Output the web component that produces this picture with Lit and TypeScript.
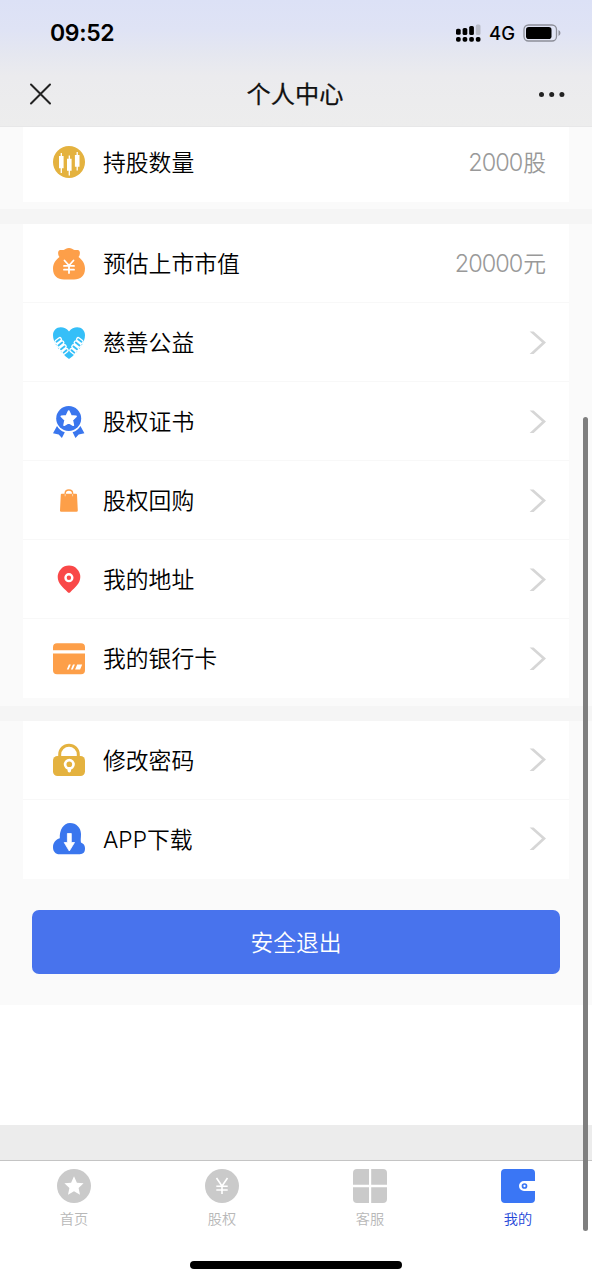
import { LitElement, html, css, svg, TemplateResult } from "lit";
import { customElement, property } from "lit/decorators.js";

const STAR = "M0 -10 L2.9 -3.6 L9.6 -3 L4.6 1.7 L6 8.4 L0 5 L-6 8.4 L-4.6 1.7 L-9.6 -3 L-2.9 -3.6 Z";
const FINGERS = "M3.500 14.800L6.800 12.300M5.500 18.500L9.200 15.600M8 22.200L11.500 19.400M10.700 25.600L13.500 23.200";

const ICONS: Record<string, TemplateResult> = {
  candles: svg`<circle cx="16" cy="16" r="16" fill="#e4b23f"/>
    <g stroke="#fff" fill="#fff"><path fill="none" stroke-width="1.3" d="M8.300 7v20M16.300 9.500v20M24.200 6v18.500"/>
    <path stroke="none" d="M6 10h4.600v12.300H6zM14 12.700h4.600v12H14zM21.900 9h4.600v11.800h-4.600z"/></g>`,
  bag: svg`<path fill="#fd9f49" d="M6.500 9C5 7.500 4.600 4 5.800 2.700c1.300-1.200 3.200-.4 4.700-.8C12.300 1.400 13.500 0 16 0s3.700 1.400 5.500 1.900c1.500.4 3.400-.4 4.700.8C27.400 4 27 7.500 25.500 9c3.500 2.500 6.500 6.500 6.500 11.500C32 28 27.500 31.500 21 31.500H11C4.500 31.500 0 28 0 20.500 0 15.500 3 11.500 6.500 9z"/>
    <path fill="none" stroke="#fff" stroke-width="1.800" stroke-linecap="round" d="M11.500 12.500l4.500 5 4.500-5M16 17.500v7.600M11 17.900h10M11 21.700h10"/>`,
  heart: svg`<path fill="#35bff8" d="M16 4.500C18.200 1.500 21.200.3 24.200.3c4.500 0 7.800 3.500 7.800 8 0 3.700-1.500 7.500-4 11.200C24.500 24.700 20.500 28.800 16 32 11.500 28.800 7.500 24.700 4 19.500 1.500 15.800 0 12 0 8.300c0-4.500 3.300-8 7.800-8 3 0 6 1.200 8.200 4.200z"/>
    <g fill="none" stroke-linecap="round">
      <path stroke="#fff" stroke-width="4.600" d=${FINGERS}/><path stroke="#35bff8" stroke-width="1.900" d=${FINGERS}/>
      <g transform="translate(32) scale(-1 1)"><path stroke="#fff" stroke-width="4.600" d=${FINGERS}/><path stroke="#35bff8" stroke-width="1.900" d=${FINGERS}/></g>
    </g>`,
  medal: svg`<circle cx="15.700" cy="12.500" r="12.500" fill="#3a76ee"/>
    <path transform="translate(15.700 12.700) scale(.76)" d=${STAR} fill="#fff" stroke="#fff" stroke-width="2.400" stroke-linejoin="round"/>
    <path fill="#3a76ee" d="M4 20C5.700 23 8 25 11.800 26.200L8.900 32 5.700 28.500 0 27.200zM27.400 20C25.700 23 23.400 25 19.600 26.200l2.900 5.800 3.200-3.500 5.700-1.300z"/>`,
  shopping: svg`<path fill="#fd9f49" d="M8.700 8.800h14.400q.8 0 .9.800l.8 15.900q0 1.300-1.300 1.300H8.200q-1.300 0-1.200-1.300L7.800 9.600q0-.8.900-.8z"/>
    <path fill="none" stroke="#fd9f49" stroke-width="1.400" d="M12.200 9.500V8.300c0-2 1.500-3.300 3.700-3.300s3.700 1.300 3.700 3.300v1.200"/>
    <path fill="none" stroke="#fdd5ad" stroke-width="1" d="M12.200 9v2.300M19.600 9v2.300"/>`,
  pin: svg`<path fill="#f94848" d="M16 1.600A11.300 11.300 0 0 1 27.300 12.900c0 6.500-5.500 10.400-9.800 15.100q-1.500 1.700-3 0C10.200 23.300 4.700 19.400 4.700 12.900A11.300 11.300 0 0 1 16 1.600z"/>
    <circle cx="15.900" cy="13.700" r="3.400" fill="none" stroke="#fff" stroke-width="2.400"/>`,
  card: svg`<path fill="#fd9f49" d="M4 .2h24a4 4 0 0 1 4 4v3.100H0V4.200a4 4 0 0 1 4-4zM0 10.500h32v16.800a4 4 0 0 1-4 4H4a4 4 0 0 1-4-4z"/>
    <path fill="#fff" d="M15.900 21.500h1.900l-2.100 5H13.800zM20 21.500h1.900l-2.100 5h-1.900zM24.200 21.500h5L27.100 26.500h-5z"/>`,
  lock: svg`<path fill="none" stroke="#e4b23f" stroke-width="3" d="M6.700 13V10.500a9.300 9.300 0 0 1 18.600 0V13"/>
    <rect y="12" width="32" height="20" rx="4.500" fill="#e4b23f"/>
    <circle cx="16.300" cy="20.300" r="4.200" fill="none" stroke="#fff" stroke-width="2.700"/><path stroke="#fff" stroke-width="3.400" stroke-linecap="round" d="M16.300 24.700v2"/>`,
  cloud: svg`<path fill="#3a76ee" d="M17 0c6.300 0 10.900 4.700 11 11 0 3.500-.5 5.500-.1 8.300.5 1 1.100.8 2 1.500 1.500 1 2.100 2.500 2.100 4.700 0 3.700-1.700 5.700-5.200 5.700H6.500c-4 0-6.500-2.700-6.500-7 0-4.700 2.700-7.500 6.800-8.900C6.300 7 10.500 0 17 0z"/>
    <path fill="#fff" stroke="#fff" stroke-width=".8" stroke-linejoin="round" d="M14.400 10.500h3.900v9h3.200L16.300 28l-5.100-8.500h3.200z"/>`,
};

@customElement("menu-row")
class MenuRow extends LitElement {
  @property() icon = "";
  @property() label = "";
  @property() amount = "";
  @property() unit = "";

  static styles = css`
    :host { display: block; height: 79px; border-bottom: 1px solid #f8f8f8; box-sizing: border-box; }
    :host(:last-of-type) { border-bottom-color: transparent; }
    .row { height: 79px; display: flex; align-items: center; padding: 0 23px 0 30px; }
    .icon { width: 32px; height: 32px; overflow: visible; flex: none; }
    .label { margin-left: 18px; flex: 1; font-size: 22.800px; color: #000; line-height: 34px; padding-top: 1px; }
    .value { display: flex; align-items: baseline; color: #999; font-size: 22.800px; line-height: 34px; padding-top: 1px; }
    .amount { font-size: 23.500px; letter-spacing: -1px; padding-right: 1px; }
    .chevron { width: 17px; height: 24px; }
  `;

  render() {
    return html`<div class="row">
      <svg class="icon" viewBox="0 0 32 32">${ICONS[this.icon]}</svg>
      <span class="label">${this.label}</span>
      ${this.amount
        ? html`<span class="value"><span class="amount">${this.amount}</span><span>${this.unit}</span></span>`
        : html`<svg class="chevron" viewBox="0 0 17 24"><path d="M.6.500H4.600L17 11.500 4.600 23H.6L13 11.500z" fill="#d6d6d6"/></svg>`}
    </div>`;
  }
}

@customElement("app-root")
class AppRoot extends LitElement {
  static styles = css`
    :host { display: block; position: relative; width: 592px; height: 1280px; overflow: hidden; background: #fff;
      font-family: Inter, "Noto Sans CJK SC", sans-serif; font-weight: 350; }
    .page { display: flex; flex-direction: column; height: 1280px; }
    .header { height: 126.500px; flex: none; box-sizing: border-box; border-bottom: 1px solid #e7e7e8;
      background: linear-gradient(#dce1f6 0, #dfe3f5 30px, #e5e7f0 54px, #ebebee 76px, #ededed 126px); }
    .status { height: 66px; padding: 0 31px 0 50px; display: flex; align-items: center; }
    .time { flex: 1; font: 600 23px/30px Inter, sans-serif; letter-spacing: -0.35px; }
    .signal { width: 26px; height: 18px; }
    .network { font: 500 18.500px/24px Inter, sans-serif; margin: 0 8px 0 8px; }
    .battery { width: 38px; height: 18px; }
    .nav { height: 59px; display: grid; grid-template-columns: 60px 1fr 60px; align-items: center; padding: 0 22px 3px 24px; box-sizing: border-box; }
    .close { width: 32px; height: 28px; }
    .title { text-align: center; font-size: 24.200px; font-weight: 400; -webkit-text-stroke: 0.25px #111; line-height: 34px; color: #111; padding: 2px 4px 0 0; }
    .more { width: 36px; height: 10px; justify-self: end; }
    .content { background: #fafafa; height: 878.500px; flex: none; display: flex; flex-direction: column; }
    .group { background: #fff; margin: 0 23px; }
    .clipped { height: 75px; overflow: hidden; display: flex; flex-direction: column; justify-content: flex-end; }
    .band { height: 15px; margin-top: 7.500px; background: #f5f5f5; }
    .logout { margin: 31px 32px 0; height: 64px; border: 0; border-radius: 7px; background: #4873ed; color: #fff; font: inherit; font-size: 22.800px; padding: 0; }
    .blank { height: 120px; flex: none; }
    .strip { height: 35px; background: #ececec; flex: none; border-bottom: 1px solid #c4c4c4; }
    .tabs { display: grid; grid-template-columns: repeat(4, 1fr); height: 94px; flex: none; }
    .tab { display: flex; flex-direction: column; align-items: center; padding-top: 8px; color: #b8b8b8; font-size: 14.200px; line-height: 22px; }
    .active { color: #2346d8; }
    .glyph { width: 34px; height: 34px; margin-bottom: 5px; }
    .home { width: 212px; height: 8px; border-radius: 4px; background: #000; margin: 6px auto 0; }
    .scrollbar { position: absolute; right: 4px; top: 417px; width: 5px; height: 814px; border-radius: 3px; background: #7f7f7f; }
  `;

  render() {
    return html`
      <div class="page">
        <header class="header">
          <div class="status">
            <span class="time">09:52</span>
            <svg class="signal" viewBox="0 0 26 18">
              <rect x="1" y="4.800" width="4.700" height="6" rx="1.600"/><rect x="7.600" y="4" width="4.700" height="7" rx="1.600"/>
              <rect x="14.200" y="2" width="4.700" height="9" rx="1.600"/><rect x="20.800" y="0.500" width="4.700" height="10.500" rx="1.600" fill="#b9bcc8"/>
              <rect x="1" y="13" width="4.700" height="4.700" rx="1.800"/><rect x="7.600" y="13" width="4.700" height="4.700" rx="1.800"/>
              <rect x="14.200" y="13" width="4.700" height="4.700" rx="1.800"/><rect x="20.800" y="13" width="4.700" height="4.700" rx="1.800"/>
            </svg>
            <span class="network">4G</span>
            <svg class="battery" viewBox="0 0 38 18">
              <rect x="1" y="1" width="32.500" height="16" rx="4.500" fill="none" stroke="#8d8f99" stroke-width="1.300"/>
              <rect x="3" y="3" width="25.500" height="12" rx="2.800"/><path d="M35.500 6q2 .8 2 3t-2 3z" fill="#8d8f99"/>
            </svg>
          </div>
          <div class="nav">
            <svg class="close" viewBox="0 0 32 28"><path d="M7 4.500L26 23.500M26 4.500L7 23.500" stroke="#222" stroke-width="2" stroke-linecap="round"/></svg>
            <span class="title">个人中心</span>
            <svg class="more" viewBox="0 0 36 10"><g fill="#222"><circle cx="7.500" cy="5.500" r="2.500"/><circle cx="17.700" cy="5.500" r="2.500"/><circle cx="27.900" cy="5.500" r="2.500"/></g></svg>
          </div>
        </header>
        <main class="content">
          <section class="group clipped"><menu-row icon="candles" label="持股数量" amount="2000" unit="股"></menu-row></section>
          <div class="band"></div>
          <section class="group">
            <menu-row icon="bag" label="预估上市市值" amount="20000" unit="元"></menu-row>
            <menu-row icon="heart" label="慈善公益"></menu-row>
            <menu-row icon="medal" label="股权证书"></menu-row>
            <menu-row icon="shopping" label="股权回购"></menu-row>
            <menu-row icon="pin" label="我的地址"></menu-row>
            <menu-row icon="card" label="我的银行卡"></menu-row>
          </section>
          <div class="band"></div>
          <section class="group">
            <menu-row icon="lock" label="修改密码"></menu-row>
            <menu-row icon="cloud" label="APP下载"></menu-row>
          </section>
          <button class="logout">安全退出</button>
        </main>
        <div class="blank"></div>
        <div class="strip"></div>
        <nav class="tabs">
          <div class="tab"><svg class="glyph" viewBox="0 0 34 34"><circle cx="17" cy="17" r="17" fill="#cacaca"/><path transform="translate(17 17.300)" d=${STAR} fill="#fff"/></svg>首页</div>
          <div class="tab"><svg class="glyph" viewBox="0 0 34 34"><circle cx="17" cy="17" r="17" fill="#cacaca"/><path d="M11.500 9l5.500 8 5.500-8M17 17v8M11.300 17.300h11.400M11.300 21h11.400" fill="none" stroke="#fff" stroke-width="1.600"/></svg>股权</div>
          <div class="tab"><svg class="glyph" viewBox="0 0 34 34"><path fill="#cacaca" d="M4 0h12v15.700H0V4a4 4 0 0 1 4-4zM18.200 0H30a4 4 0 0 1 4 4v11.700H18.200zM0 18.300h16V34H4a4 4 0 0 1-4-4zM18.200 18.300H34V30a4 4 0 0 1-4 4H18.200z"/></svg>客服</div>
          <div class="tab active"><svg class="glyph" viewBox="0 0 34 34"><path fill="#3a76f5" d="M4 0h26a4 4 0 0 1 4 4v8H23a5 5 0 0 0 0 10h11v8a4 4 0 0 1-4 4H4a4 4 0 0 1-4-4V4a4 4 0 0 1 4-4z"/><circle cx="23.500" cy="17" r="2" fill="none" stroke="#3a76f5" stroke-width="1.700"/></svg>我的</div>
        </nav>
        <div class="home"></div>
      </div>
      <div class="scrollbar"></div>
    `;
  }
}
